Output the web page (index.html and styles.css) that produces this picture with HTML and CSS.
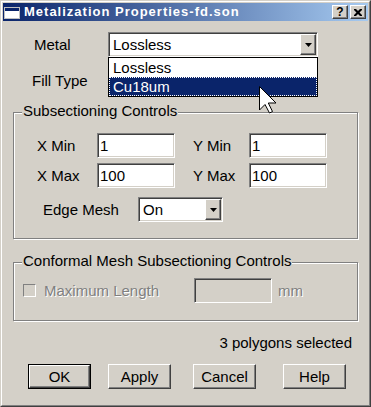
FILE: index.html
```html
<!DOCTYPE html>
<html>
<head>
<meta charset="utf-8">
<link rel="stylesheet" href="styles.css">
</head>
<body>
<div class="window">
  <div class="frame">
    <div class="titlebar">
      <svg class="appicon" width="16" height="12" viewBox="0 0 16 12">
        <rect x="0.5" y="0.5" width="15" height="11" fill="#fff" stroke="#c0c0c0"/>
        <rect x="1" y="1" width="14" height="3" fill="#0a246a"/>
      </svg>
      <span class="title">Metalization Properties-fd.son</span>
      <span class="tbtn help">?</span>
      <span class="tbtn close">
        <svg width="8" height="7" viewBox="0 0 8 7"><path d="M0 0h2l2 2 2-2h2v1l-2.5 2.5L8 6v1H6L4 5 2 7H0V6l2.5-2.5L0 1z" fill="#000"/></svg>
      </span>
    </div>
    <div class="body">
      <div class="row r-metal">
        <span class="lbl lbl-metal">Metal</span>
        <div class="combo-wrap metal">
          <div class="combo sunken">
            <span class="combo-text">Lossless</span>
            <span class="arrow raised"><svg width="7" height="4" viewBox="0 0 7 4"><path d="M0 0h7L3.5 4z" fill="#000"/></svg></span>
          </div>
          <div class="droplist">
            <div class="item">Lossless</div>
            <div class="item sel">Cu18um</div>
          </div>
        </div>
      </div>
      <div class="row r-fill">
        <span class="lbl">Fill Type</span>
      </div>

      <div class="group g1">
        <span class="legend">Subsectioning Controls</span>
        <div class="row r-xmin">
          <span class="lbl lbl-x">X Min</span>
          <div class="input sunken">1</div>
          <span class="lbl lbl-y">Y Min</span>
          <div class="input sunken">1</div>
        </div>
        <div class="row r-xmax">
          <span class="lbl lbl-x">X Max</span>
          <div class="input sunken">100</div>
          <span class="lbl lbl-y">Y Max</span>
          <div class="input sunken">100</div>
        </div>
        <div class="row r-edge">
          <span class="lbl lbl-edge">Edge Mesh</span>
          <div class="combo sunken edge">
            <span class="combo-text">On</span>
            <span class="arrow raised"><svg width="7" height="4" viewBox="0 0 7 4"><path d="M0 0h7L3.5 4z" fill="#000"/></svg></span>
          </div>
        </div>
      </div>

      <div class="group g2">
        <span class="legend">Conformal Mesh Subsectioning Controls</span>
        <div class="row r-max">
          <span class="check"></span>
          <span class="lbl disabled lbl-maxlen">Maximum Length</span>
          <div class="input sunken off"></div>
          <span class="lbl disabled mm">mm</span>
        </div>
      </div>

      <div class="status">3 polygons selected</div>

      <div class="buttons">
        <span class="btn default"><span class="btn-in raised">OK</span></span>
        <span class="btn b-apply raised">Apply</span>
        <span class="btn b-cancel raised">Cancel</span>
        <span class="btn b-help raised">Help</span>
      </div>
    </div>
  </div>
  <svg class="cursor" width="18" height="28" viewBox="0 0 18 28">
    <path d="M0.5 0.5 L0.5 24 L6 18.5 L10.5 27 L13.5 25.5 L9.3 17 L17 17 Z" fill="#fff" stroke="#000" stroke-width="1" stroke-linejoin="miter"/>
  </svg>
</div>
</body>
</html>
```

FILE: styles.css
```css
* { box-sizing: border-box; }
html, body { margin: 0; padding: 0; }
body {
  font-family: "Liberation Sans", Arial, sans-serif;
  font-size: 15px;
  color: #000;
  background: #d4d0c8;
}
.window {
  position: relative;
  width: 371px;
  height: 407px;
  border: 1px solid;
  border-color: #d4d0c8 #404040 #404040 #d4d0c8;
  background: #d4d0c8;
}
.frame {
  width: 100%;
  height: 100%;
  border: 1px solid;
  border-color: #fff #808080 #808080 #fff;
  padding: 1px;
}
.titlebar {
  height: 18px;
  display: flex;
  align-items: center;
  background: linear-gradient(to right, #0a246a, #a6caf0);
  color: #fff;
}
.appicon { margin-left: 1px; margin-top: 1px; flex: none; }
.title {
  margin-left: 4px;
  font-weight: bold;
  font-size: 13px;
  letter-spacing: 1px;
  flex: 1;
  line-height: 18px;
}
.tbtn {
  width: 16px;
  height: 14px;
  background: #d4d0c8;
  border: 1px solid;
  border-color: #fff #404040 #404040 #fff;
  box-shadow: inset -1px -1px #808080, inset 1px 1px #d4d0c8;
  color: #000;
  display: flex;
  align-items: center;
  justify-content: center;
  font-weight: bold;
  font-size: 12px;
  line-height: 12px;
}
.tbtn.close { margin-left: 2px; margin-right: 2px; }

.raised {
  background: #d4d0c8;
  border: 1px solid;
  border-color: #fff #404040 #404040 #fff;
  box-shadow: inset -1px -1px #808080, inset 1px 1px #d4d0c8;
}
.sunken {
  border: 1px solid;
  border-color: #808080 #fff #fff #808080;
  box-shadow: inset 1px 1px #404040, inset -1px -1px #d4d0c8;
}

.row { display: flex; align-items: center; height: 25px; }
.lbl { flex: none; line-height: 16px; }

.r-metal { margin-top: 11px; padding-left: 31px; }
.lbl-metal { width: 74px; }
.combo-wrap { position: relative; }
.combo-wrap.metal { width: 210px; height: 25px; }
.combo {
  display: flex;
  height: 25px;
  padding: 1px;
  background: #fff;
}
.combo-text { flex: 1; padding-left: 3px; line-height: 21px; }
.arrow {
  width: 16px;
  height: 21px;
  flex: none;
  display: flex;
  align-items: center;
  justify-content: center;
}
.droplist {
  position: absolute;
  left: 0;
  top: 25px;
  width: 210px;
  border: 1px solid #000;
  background: #fff;
  z-index: 2;
}
.item { height: 19px; line-height: 19px; padding-left: 4px; }
.item.sel {
  background: #0a246a;
  color: #fff;
  outline: 1px dotted #fff;
  outline-offset: -1px;
}

.r-fill { margin-top: 11px; padding-left: 29px; }

.group {
  margin-left: 10px;
  width: 345px;
  border: 1px solid #808080;
  box-shadow: inset 1px 1px #fff, 1px 1px #fff;
  display: flex;
  flex-direction: column;
}
.legend {
  align-self: flex-start;
  margin-top: -10px;
  margin-left: 8px;
  padding: 0 1px;
  height: 16px;
  line-height: 16px;
  background: #d4d0c8;
}
.g1 { margin-top: 19px; height: 127px; }
.g2 { margin-top: 23px; height: 59px; }

.r-xmin { margin-top: 14px; padding-left: 23px; }
.r-xmax { margin-top: 5px; padding-left: 23px; }
.lbl-x { width: 60px; }
.lbl-y { width: 56px; margin-left: 18px; }
.input {
  width: 78px;
  height: 25px;
  background: #fff;
  padding-left: 2px;
  line-height: 23px;
  flex: none;
}
.input.off { background: #d4d0c8; }
.r-edge { margin-top: 9px; padding-left: 29px; }
.lbl-edge { width: 95px; }
.combo.edge { width: 85px; }

.r-max { margin-top: 9px; padding-left: 9px; }
.check {
  width: 13px;
  height: 13px;
  background: #d4d0c8;
  border: 1px solid;
  border-color: #808080 #fff #fff #808080;
  flex: none;
}
.disabled { color: #808080; text-shadow: 1px 1px 0 #fff; }
.lbl-maxlen { margin-left: 8px; width: 150px; }
.mm { margin-left: 6px; }

.status {
  margin-top: 14px;
  height: 16px;
  line-height: 16px;
  text-align: right;
  padding-right: 16px;
}

.buttons { margin-top: 13px; display: flex; height: 25px; padding-left: 25px; }
.btn {
  width: 63px;
  height: 25px;
  display: flex;
  align-items: center;
  justify-content: center;
  line-height: 16px;
  flex: none;
}
.btn.default { border: 1px solid #000; }
.btn-in {
  width: 100%;
  height: 100%;
  display: flex;
  align-items: center;
  justify-content: center;
}
.b-apply { margin-left: 17px; }
.b-cancel { margin-left: 22px; }
.b-help { margin-left: 27px; }

.cursor {
  position: absolute;
  left: 258px;
  top: 85px;
  z-index: 5;
}
```
